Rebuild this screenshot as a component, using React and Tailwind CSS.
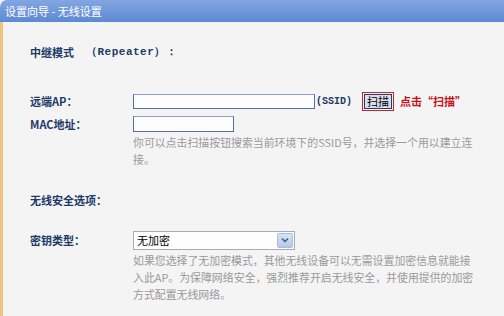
import React from 'react';

const font = { fontFamily: '"Noto Sans CJK SC", "Noto Sans", sans-serif' };

function Label({ children, className = '' }) {
    return (
        <div className={`w-[103px] shrink-0 text-[11px] font-bold text-[#1e3a66] ${className}`}>{children}</div>
    );
}

export default function App() {
    return (
        <div className="w-[504px] h-[316px] bg-[#f4f4f4] overflow-hidden" style={font}>
            {/* Title bar */}
            <div className="h-[22px] flex items-center pl-[5px] rounded-tl-[7px] bg-gradient-to-b from-[#82a6e2] to-[#5d89d3] text-white text-[11px]">
                设置向导 - 无线设置
            </div>

            {/* Body */}
            <div className="h-[294px] border-l-[3px] border-[#f2c27e] pl-[27px] pt-[22px]">
                <div className="flex items-center h-[16px] text-[11px] font-bold text-[#1e3a66]">
                    <span className="w-[56px]">中继模式</span>
                    <span className="tracking-[0.5px]" style={{ fontFamily: '"Liberation Mono", monospace' }}>（Repeater）：</span>
                </div>

                {/* Remote AP */}
                <div className="flex items-center h-[20px] mt-[31px]">
                    <Label>远端AP：</Label>
                    <div className="w-[182px] h-[15px] bg-[#fdfdfd] border border-[#5a6f92] border-t-[#8aa0c4]" />
                    <span className="ml-[1px] text-[10px] font-bold text-[#1e3a66]" style={{ fontFamily: '"Liberation Mono", monospace' }}>(SSID)</span>
                    <div className="ml-[10px] border border-[#c0262c] p-[1px]">
                        <button className="w-[28px] h-[15px] flex items-center justify-center bg-[#dcdff0] border border-[#2a3a5c] text-[11px] text-black leading-none">
                            扫描
                        </button>
                    </div>
                    <span className="ml-[6px] text-[11px] font-bold text-[#c8101a]">点击“扫描”</span>
                </div>

                {/* MAC */}
                <div className="flex items-center h-[20px] mt-[3px]">
                    <Label>MAC地址：</Label>
                    <div className="w-[101px] h-[16px] bg-[#fdfdfd] border border-[#5a6f92] border-t-[#8aa0c4]" />
                </div>
                <div className="ml-[103px] text-[10.9px] leading-[17px] text-[#9a9a9a] whitespace-nowrap">
                    你可以点击扫描按钮搜索当前环境下的SSID号，并选择一个用以建立连<br />接。
                </div>

                {/* Security */}
                <div className="flex items-center h-[16px] mt-[24px]">
                    <Label>无线安全选项：</Label>
                </div>

                <div className="flex items-center h-[20px] mt-[22px]">
                    <Label>密钥类型：</Label>
                    <div className="w-[162px] h-[19px] flex items-stretch bg-white border border-[#a5acb5]">
                        <span className="flex-1 pl-[3px] text-[11px] leading-[17px] text-black">无加密</span>
                        <span className="w-[16px] m-[1px] flex items-center justify-center rounded-[2px] bg-gradient-to-b from-[#d7e4f7] to-[#b4c9ea] border border-[#a8bddd]">
                            <svg width="8" height="6" viewBox="0 0 8 6">
                                <path d="M1 1.5 L4 4.5 L7 1.5" fill="none" stroke="#4d6185" strokeWidth="1.6" />
                            </svg>
                        </span>
                    </div>
                </div>
                <div className="ml-[103px] mt-[2px] text-[10.9px] leading-[17px] text-[#9a9a9a] whitespace-nowrap">
                    如果您选择了无加密模式，其他无线设备可以无需设置加密信息就能接<br />
                    入此AP。为保障网络安全，强烈推荐开启无线安全，并使用提供的加密<br />
                    方式配置无线网络。
                </div>
            </div>
        </div>
    );
}
